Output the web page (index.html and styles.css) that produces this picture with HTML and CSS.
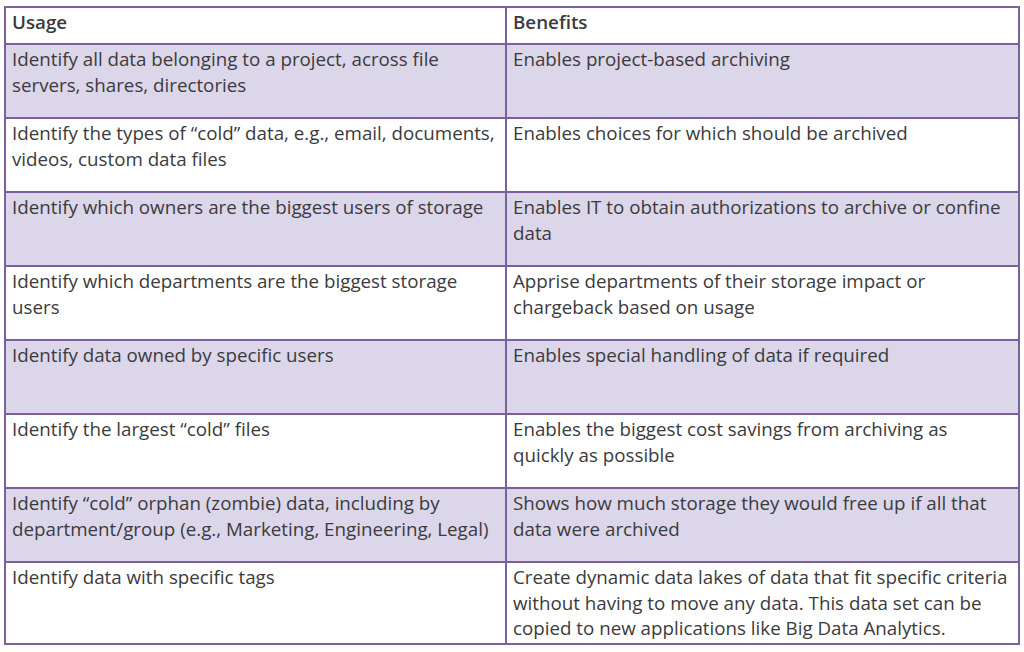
FILE: index.html
```html
<!DOCTYPE html>
<html>
<head>
<meta charset="utf-8">
<link rel="stylesheet" href="styles.css">
</head>
<body>
<table class="grid">
  <colgroup><col class="c1"><col class="c2"></colgroup>
  <thead>
    <tr class="head"><th>Usage</th><th>Benefits</th></tr>
  </thead>
  <tbody>
    <tr class="alt"><td>Identify all data belonging to a project, across file servers, shares, directories</td><td>Enables project-based archiving</td></tr>
    <tr><td>Identify the types of “cold” data, e.g., email, documents, videos, custom data files</td><td>Enables choices for which should be archived</td></tr>
    <tr class="alt"><td>Identify which owners are the biggest users of storage</td><td>Enables IT to obtain authorizations to archive or confine data</td></tr>
    <tr><td>Identify which departments are the biggest storage users</td><td>Apprise departments of their storage impact or chargeback based on usage</td></tr>
    <tr class="alt"><td>Identify data owned by specific users</td><td>Enables special handling of data if required</td></tr>
    <tr><td>Identify the largest “cold” files</td><td>Enables the biggest cost savings from archiving as quickly as possible</td></tr>
    <tr class="alt"><td>Identify “cold” orphan (zombie) data, including by department/group (e.g., Marketing, Engineering, Legal)</td><td>Shows how much storage they would free up if all that data were archived</td></tr>
    <tr class="last"><td>Identify data with specific tags</td><td>Create dynamic data lakes of data that fit specific criteria without having to move any data. This data set can be copied to new applications like Big Data Analytics.</td></tr>
  </tbody>
</table>
</body>
</html>
```

FILE: styles.css
```css
html, body {
  margin: 0;
  padding: 0;
  background: #ffffff;
}
body {
  padding: 6px 0 0 4px;
  font-family: "Open Sans", "Liberation Sans", sans-serif;
  color: #3b3a3c;
}
.grid {
  border-collapse: collapse;
  width: 1014px;
  table-layout: fixed;
}
.c1 { width: 501px; }
.c2 { width: 513px; }
.grid th, .grid td {
  border: 2px solid #7d5f9c;
  text-align: left;
  vertical-align: top;
  font-size: 18.75px;
  line-height: 25.5px;
  padding: 1px 5px 0 6px;
}
.grid th {
  font-weight: 600;
  padding-top: 1px;
}
.head { height: 37px; }
.grid tbody tr { height: 74px; }
.grid tbody tr.last { height: 82px; }
.alt td { background: #dcd6ea; }
```
